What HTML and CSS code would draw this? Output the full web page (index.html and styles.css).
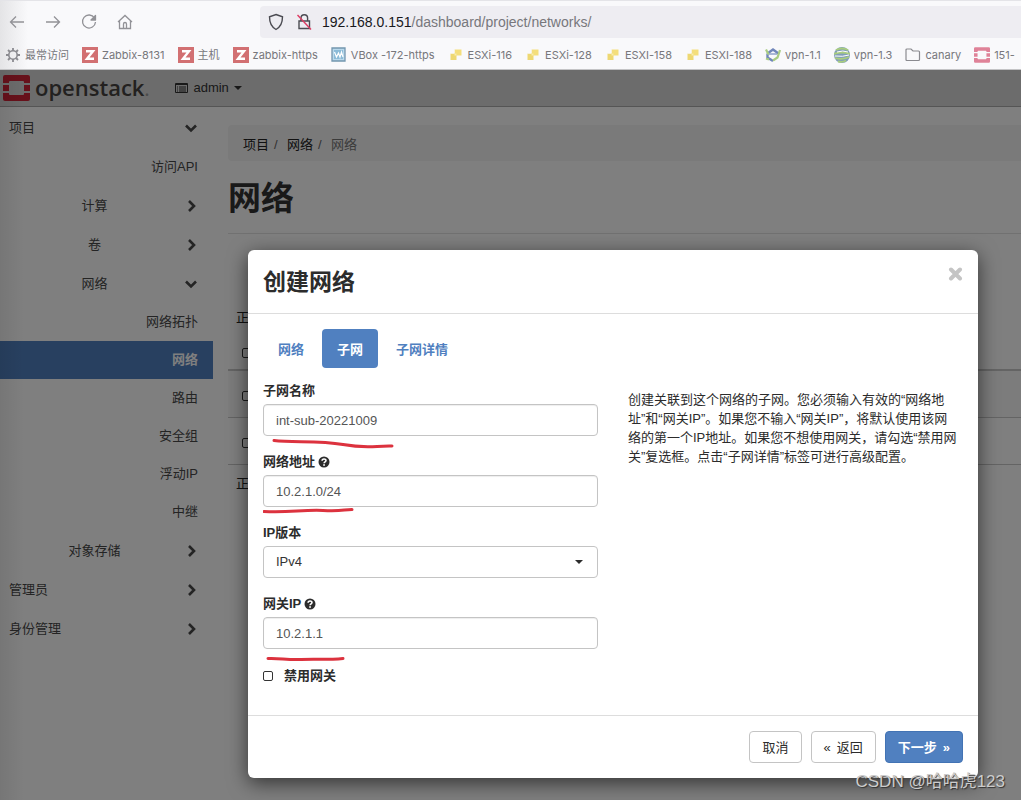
FILE: index.html
```html
<!DOCTYPE html>
<html lang="zh-CN">
<head>
<meta charset="utf-8">
<meta name="viewport" content="width=device-width, initial-scale=1">
<title>网络 - OpenStack Dashboard</title>
<link rel="stylesheet" href="styles.css">
</head>
<body>
<svg class="defs" aria-hidden="true">
  <symbol id="down" viewBox="0 0 14 14"><path d="M2 4.500l5 5 5-5" fill="none" stroke="currentColor" stroke-width="2.6"/></symbol>
  <symbol id="right" viewBox="0 0 14 14"><path d="M5 2l5 5-5 5" fill="none" stroke="currentColor" stroke-width="2.6"/></symbol>
  <symbol id="caret" viewBox="0 0 8 4"><path d="M0 0h8L4 4z" fill="currentColor"/></symbol>
  <symbol id="help" viewBox="0 0 12 12"><circle cx="6" cy="6" r="5.5" fill="currentColor"/><path d="M4.1 4.7C4.1 2.4 8 2.4 8 4.6 8 6 6.1 5.9 6.1 7.3" fill="none" stroke="#fff" stroke-width="1.6"/><rect x="5.2" y="8.2" width="1.7" height="1.6" fill="#fff"/></symbol>
  <symbol id="z" viewBox="0 0 16 16"><path d="M0 0h16v16H0z" fill="#d27072"/><path d="M4 4.200h7L5 11.800h7" fill="none" stroke="#fff" stroke-width="2.4"/></symbol>
  <symbol id="esx" viewBox="0 0 16 16"><path d="M6.500 2.500h7v6h-7z" fill="#f4de7c"/><path d="M2.500 6.500h6v6.500h-6z" fill="#eed873"/><path d="M6.500 6.500h2v2h-2z" fill="#f9ecad"/><path d="M2.500 2.500h4v4h-4z" fill="#f9f9fb"/></symbol>
  <symbol id="ostack" viewBox="0 0 27 26"><path d="M2 0h23a2 2 0 0 1 2 2v6h-6V7a1 1 0 0 0-1-1H7a1 1 0 0 0-1 1v1H0V2a2 2 0 0 1 2-2zM0 10h6v6H0zM21 10h6v6h-6zM0 18h6v1a1 1 0 0 0 1 1h13a1 1 0 0 0 1-1v-1h6v6a2 2 0 0 1-2 2H2a2 2 0 0 1-2-2z" fill="currentColor"/></symbol>
</svg>
<div class="browser">
  <header class="toolbar">
    <div class="nav-buttons">
      <button type="button" aria-label="后退"><svg viewBox="0 0 18 18"><path d="M16 9H2.500M8 3.500L2.500 9 8 14.500"/></svg></button>
      <button type="button" aria-label="前进"><svg viewBox="0 0 18 18"><path d="M2 9h13.500M10 3.500L15.500 9 10 14.500"/></svg></button>
      <button type="button" aria-label="刷新"><svg viewBox="0 0 18 18"><path d="M14.500 5A6.500 6.500 0 1 0 15.500 9"/><path d="M15.500 2.500v4.500H11z" fill="#929297"/></svg></button>
      <button type="button" aria-label="主页"><svg viewBox="0 0 18 18"><path d="M2 9l7-6.500L16 9M3.500 8v7.500h11V8M7.500 15.500V11q0-1.500 1.500-1.500t1.500 1.500v4.500"/></svg></button>
    </div>
    <div class="address">
      <svg viewBox="0 0 16 18"><path d="M8 1.500l6.500 2.300c0 6-1.500 10-6.500 12.700C3 13.800 1.500 9.800 1.500 3.800z"/></svg>
      <svg viewBox="0 0 16 18"><path d="M3 8h10.500v7.500H3zM5 8V5a3.300 3.300 0 0 1 6.600 0v3"/><path class="slash" d="M1.500 2L15 16.500"/></svg>
      <span class="url"><b>192.168.0.151</b>/dashboard/project/networks/</span>
    </div>
  </header>
  <nav class="bookmarks" aria-label="书签">
    <a href="#"><svg viewBox="0 0 16 16"><circle cx="8" cy="8" r="4.200" fill="none" stroke="#8b8b90" stroke-width="1.600"/><path d="M8 1v3M8 12v3M1 8h3M12 8h3M3 3l2 2M11 11l2 2M13 3l-2 2M5 11l-2 2" stroke="#8b8b90" stroke-width="1.800"/></svg>最常访问</a>
    <a href="#"><svg><use href="#z"/></svg>Zabbix-8131</a>
    <a href="#"><svg><use href="#z"/></svg>主机</a>
    <a href="#"><svg><use href="#z"/></svg>zabbix-https</a>
    <a href="#"><svg viewBox="0 0 16 16"><path d="M1 1h13v13H1z" fill="#b9d9ec" stroke="#7396af" stroke-width="1.300"/><path d="M3 3h9v9H3z" fill="#8bbbd8"/><path d="M3.500 5l2 5 2-4 1.500 4 1.500-5 1.500 5" fill="none" stroke="#fff" stroke-width="1.200"/></svg>VBox -172-https</a>
    <a href="#"><svg><use href="#esx"/></svg>ESXi-116</a>
    <a href="#"><svg><use href="#esx"/></svg>ESXi-128</a>
    <a href="#"><svg><use href="#esx"/></svg>ESXI-158</a>
    <a href="#"><svg><use href="#esx"/></svg>ESXI-188</a>
    <a href="#"><svg viewBox="0 0 16 16"><path d="M2.500 6.500L8 2.500l5.500 4M2.500 6.500v4L8 14" fill="none" stroke="#7187ba" stroke-width="2.400"/><path d="M4 7h8" stroke="#8fa2cb" stroke-width="1.500"/><path d="M1 2.500l2.500 5M15 3l-2.500 7.500L8 13.500M1 11.500l3 1" fill="none" stroke="#a9cd83" stroke-width="2.200"/></svg>vpn-1.1</a>
    <a href="#"><svg viewBox="0 0 16 16"><circle cx="8" cy="8" r="8" fill="#819eb9"/><path d="M2 3q6-3 12 0M0 7q8-3 16 0M1 11q7 2 14-1M4 14.500q5 1 8-1" fill="none" stroke="#a9cd7e" stroke-width="1.800"/><path d="M3 5q6-2 11 0M1 9q8 1 14-1" fill="none" stroke="#fff"/></svg>vpn-1.3</a>
    <a href="#"><svg viewBox="0 0 16 16"><path d="M1 3q0-1 1-1h4l2 2h5.500q1 0 1 1v7.500q0 1-1 1H2q-1 0-1-1z" fill="none" stroke="#8b8b90" stroke-width="1.200"/></svg>canary</a>
    <a href="#" class="pink"><svg><use href="#ostack"/></svg>151-</a>
  </nav>
</div>
<div class="viewport">
  <div class="navbar">
    <a href="#" class="brand"><svg><use href="#ostack"/></svg><span>openstack<small>.</small></span></a>
    <button type="button" class="project"><svg class="list" viewBox="0 0 13 10"><path d="M.5.500h12v9H.5z" fill="none" stroke="currentColor"/><path d="M0 1.500h13M2 4h1M4 4h7M2 6h1M4 6h7M2 8h1M4 8h7" stroke="currentColor"/></svg>admin<svg class="caret"><use href="#caret"/></svg></button>
  </div>
  <div class="page">
    <nav class="sidebar" aria-label="主导航">
      <a href="#" class="top"><span>项目</span><svg><use href="#down"/></svg></a>
      <a href="#" class="leaf head">访问API</a>
      <a href="#" class="group"><span>计算</span><svg><use href="#right"/></svg></a>
      <a href="#" class="group"><span>卷</span><svg><use href="#right"/></svg></a>
      <a href="#" class="group"><span>网络</span><svg><use href="#down"/></svg></a>
      <a href="#" class="leaf">网络拓扑</a>
      <a href="#" class="leaf active">网络</a>
      <a href="#" class="leaf">路由</a>
      <a href="#" class="leaf">安全组</a>
      <a href="#" class="leaf">浮动IP</a>
      <a href="#" class="leaf">中继</a>
      <a href="#" class="group"><span>对象存储</span><svg><use href="#right"/></svg></a>
      <a href="#" class="top"><span>管理员</span><svg><use href="#right"/></svg></a>
      <a href="#" class="top"><span>身份管理</span><svg><use href="#right"/></svg></a>
    </nav>
    <main class="content">
      <nav class="breadcrumb" aria-label="路径"><a href="#">项目</a><i>/</i><a href="#">网络</a><i>/</i><span>网络</span></nav>
      <h1>网络</h1>
      <p class="count">正在显示 2 项</p>
      <table>
        <thead><tr><th><input type="checkbox" aria-label="全选"></th></tr></thead>
        <tbody>
          <tr><td><input type="checkbox" aria-label="选择第 1 行"></td></tr>
          <tr><td><input type="checkbox" aria-label="选择第 2 行"></td></tr>
        </tbody>
      </table>
      <p class="count">正在显示 2 项</p>
    </main>
  </div>
  <div class="backdrop">
    <form class="modal" role="dialog" aria-labelledby="title">
      <header class="modal-head">
        <h2 id="title">创建网络</h2>
        <button type="button" class="close" aria-label="关闭"><svg viewBox="0 0 14 14"><path d="M2.500 2.500l9 9M11.500 2.500l-9 9" stroke="currentColor" stroke-width="4" stroke-linecap="round"/></svg></button>
      </header>
      <div class="modal-body">
        <nav class="tabs"><a href="#">网络</a><a href="#" class="on">子网</a><a href="#">子网详情</a></nav>
        <div class="columns">
          <div class="fields">
            <div class="field">
              <label for="name">子网名称</label>
              <input type="text" id="name" value="int-sub-20221009">
              <svg class="mark" viewBox="0 0 140 16"><path d="M11 4.500C30 7 55 4 80 8.500S112 9.500 129 10"/></svg>
            </div>
            <div class="field">
              <label for="cidr">网络地址 <svg><use href="#help"/></svg></label>
              <input type="text" id="cidr" value="10.2.1.0/24">
              <svg class="mark" viewBox="0 0 140 16"><path d="M1 4.500C25 6 40 2.500 60 3.500S80 2.500 89 2.500"/></svg>
            </div>
            <div class="field">
              <label for="version">IP版本</label>
              <div class="select"><select id="version"><option>IPv4</option><option>IPv6</option></select><svg class="caret"><use href="#caret"/></svg></div>
            </div>
            <div class="field">
              <label for="gateway">网关IP <svg><use href="#help"/></svg></label>
              <input type="text" id="gateway" value="10.2.1.1">
              <svg class="mark" viewBox="0 0 140 16"><path d="M5 9.500C18 9 22 11 38 10.500S65 11 80 9.500"/></svg>
            </div>
            <label class="check"><input type="checkbox">禁用网关</label>
          </div>
          <p class="help">创建关联到这个网络的子网。您必须输入有效的“网络地址”和“网关IP”。如果您不输入“网关IP”，将默认使用该网络的第一个IP地址。如果您不想使用网关，请勾选“禁用网关”复选框。点击“子网详情”标签可进行高级配置。</p>
        </div>
      </div>
      <footer class="modal-foot">
        <button type="button">取消</button>
        <button type="button"><span>«</span>返回</button>
        <button type="submit" class="primary">下一步<span>»</span></button>
      </footer>
    </form>
  </div>
</div>
<div class="watermark">CSDN @哈哈虎123</div>
</body>
</html>
```
FILE: styles.css
```css
* { box-sizing: border-box; }
body {
  margin: 0;
  min-height: 100vh;
  display: flex;
  flex-direction: column;
  overflow: hidden;
  position: relative;
  font: 13px/18px "Liberation Sans", "Noto Sans CJK SC", sans-serif;
  color: #333;
}
a { color: inherit; text-decoration: none; }
button, input, select { font: inherit; color: inherit; }
button { background: none; border: 0; padding: 0; }
svg { flex: none; display: block; }
.defs { position: absolute; width: 0; height: 0; }

.browser {
  background: linear-gradient(90deg, #e4e4e6, #f9f9fb 28px);
  border-top: 1px solid #e4e4e8;
  border-bottom: 1px solid #c4c4c6;
}
.toolbar { display: flex; align-items: center; height: 41px; padding-left: 8px; }
.nav-buttons { display: flex; gap: 18px; width: 252px; }
.nav-buttons svg {
  width: 18px; height: 18px;
  fill: none; stroke: #929297; stroke-width: 1.3;
}
.nav-buttons button:nth-child(3) path { stroke-linejoin: round; }
.address {
  flex: 1;
  display: flex;
  align-items: center;
  gap: 12px;
  height: 32px;
  padding-left: 8px;
  background: #eeedf2;
  border-radius: 4px 0 0 4px;
}
.address svg { width: 16px; height: 18px; fill: none; stroke: #4b4b52; stroke-width: 1.4; }
.address .slash { stroke: #dd3c63; }
.url { font: 14px/20px "Liberation Sans", sans-serif; color: #77777c; margin-left: -2px; }
.url b { font-weight: 400; color: #18181c; }
.bookmarks {
  display: flex;
  gap: 13px;
  height: 27px;
  padding: 5px 0 6px 5px;
  overflow: hidden;
  white-space: nowrap;
  font: 11px/16px Inter, "Noto Sans CJK SC", sans-serif;
  color: #77777b;
}
.bookmarks a { display: flex; gap: 4px; flex: none; }
.bookmarks svg { width: 16px; height: 16px; }
.pink svg { color: #df8298; }

.viewport { flex: 1; position: relative; display: flex; flex-direction: column; background: #fff; }
.navbar {
  display: flex;
  align-items: center;
  height: 37px;
  padding-left: 3px;
  gap: 26px;
  background: #d8d8d8;
  border-bottom: 1px solid #aaa;
}
.brand { display: flex; align-items: center; gap: 5px; color: #464341; }
.brand svg { width: 27px; height: 26px; color: #cf2336; }
.brand span { font: 600 22px/26px "Open Sans", sans-serif; }
.brand small { color: #999; font-size: 18px; }
.project { display: flex; align-items: center; gap: 5px; }
.list { width: 13px; height: 10px; }
.caret { width: 8px; height: 4px; }
.page { flex: 1; display: flex; }
.sidebar { width: 213px; padding-top: 1px; color: #484848; }
.sidebar a { display: flex; align-items: center; height: 39px; padding-right: 15px; }
.sidebar span { flex: 1; }
.sidebar svg { width: 14px; height: 14px; }
.sidebar .top { padding-left: 9px; }
.sidebar .group span { text-align: center; padding-left: 5px; }
.sidebar .leaf { justify-content: flex-end; height: 38px; }
.sidebar .head { height: 39px; }
.sidebar .active { background: #5080c0; color: #fff; font-weight: 700; }
.content { flex: 1; min-width: 0; padding: 18px 0 0 15px; }
.breadcrumb {
  display: flex;
  height: 36px;
  padding: 11px 15px 9px;
  line-height: 18px;
  background: #f4f4f4;
  border-radius: 4px 0 0 4px;
  color: #222;
}
.breadcrumb i { width: 18px; padding-left: 5px; font-style: normal; color: #666; }
.breadcrumb span { color: #777; }
h1 {
  margin: 20px 0 0;
  padding-bottom: 16px;
  border-bottom: 1px solid #e2e2e2;
  font-size: 33px;
  line-height: 36px;
}
.count { margin: 0; padding-left: 8px; line-height: 38px; color: #222; }
h1 + .count { padding-top: 65px; }
table { width: 100%; border-collapse: collapse; }
th, td { height: 47px; padding: 4px 0 0 14px; text-align: left; border-bottom: 1px solid #c8c8c8; }
th { height: 33px; padding: 0 0 0 14px; border-bottom: 2px solid #c8c8c8; }
tbody tr:nth-child(odd) { background: #f8f8f8; }
input[type="checkbox"] {
  appearance: none;
  display: block;
  width: 10px; height: 10px;
  margin: 0;
  border: 1px solid #333;
  border-radius: 2px;
  background: #fff;
}

.backdrop {
  position: absolute;
  inset: 0;
  padding: 180px 43px 22px 248px;
  background: linear-gradient(90deg, rgba(0,0,0,.07), transparent 24px), rgba(0,0,0,.5);
}
.modal {
  background: #fff;
  border-radius: 6px;
  box-shadow: 0 5px 20px rgba(0,0,0,.6);
  color: #2c2c2c;
}
.modal-head {
  display: flex;
  justify-content: space-between;
  padding: 17px 15px 16px;
  border-bottom: 1px solid #ddd;
}
h2 { margin: 0; font-size: 23px; line-height: 30px; }
.close { height: 14px; color: #c4c4c4; }
.close svg { width: 15px; height: 14px; }
.modal-body { padding: 15px 15px 29px; }
.tabs { display: flex; gap: 3px; font-weight: 700; color: #5080c0; }
.tabs a { padding: 12px 15px 9px; border-radius: 4px; }
.tabs .on { background: #5080c0; color: #fff; }
.columns { display: grid; grid-template-columns: 1fr 1fr; gap: 30px; padding-top: 14px; }
.field { position: relative; margin-bottom: 17px; }
.field label { display: flex; align-items: center; gap: 3px; margin-bottom: 4px; font-weight: 700; }
.field label svg { width: 12px; height: 12px; }
.field input, select {
  display: block;
  width: 100%;
  height: 32px;
  padding: 0 12px;
  border: 1px solid #c4c4c4;
  border-radius: 4px;
  background: #fff;
  color: #555;
  box-shadow: inset 0 1px 1px rgba(0,0,0,.07);
}
select { appearance: none; color: #333; box-shadow: none; }
.select { position: relative; }
.select .caret { position: absolute; right: 15px; top: 14px; pointer-events: none; }
.mark {
  position: absolute;
  left: 0; top: 100%;
  width: 140px; height: 16px;
  fill: none; stroke: #dc323e; stroke-width: 3; stroke-linecap: round;
  pointer-events: none;
}
.check { display: flex; align-items: center; gap: 11px; height: 20px; font-weight: 700; }
.help { margin: 0; padding: 8px 4px 0 0; line-height: 19px; }
.modal-foot {
  display: flex;
  justify-content: flex-end;
  gap: 9px;
  padding: 15px;
  border-top: 1px solid #ddd;
}
.modal-foot button {
  display: flex;
  align-items: center;
  gap: 6px;
  height: 32px;
  padding: 1px 12px 0;
  border: 1px solid #c4c4c4;
  border-radius: 4px;
}
.modal-foot .primary { background: #5080c0; border-color: #4273b4; color: #fff; font-weight: 700; }
.watermark {
  position: absolute;
  right: 16px; bottom: 7px;
  font-size: 17px;
  line-height: 22px;
  color: #ccc;
  text-shadow: 1px 1px 1px #333;
}
```
